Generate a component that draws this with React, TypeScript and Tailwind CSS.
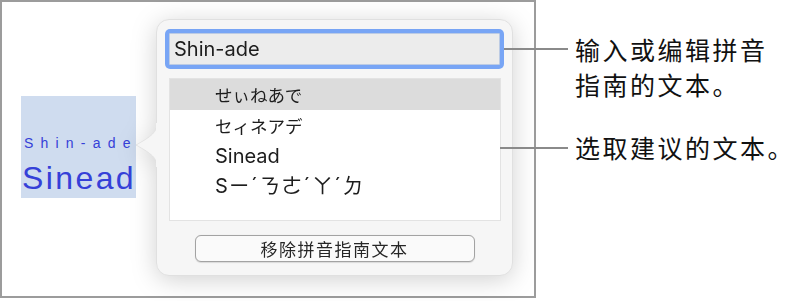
export default function App() {
  const cjk = { fontFamily: '"Noto Sans CJK SC", "Noto Sans", sans-serif' };
  const jp = { fontFamily: '"Noto Sans CJK JP", "Noto Sans", sans-serif' };
  return (
    <div className="relative w-[803px] h-[301px] bg-white overflow-hidden text-[#1d1d1d]" style={{ fontFamily: 'Inter, "Noto Sans CJK SC", sans-serif' }}>
      <div className="flex items-start">
        {/* Frame */}
        <div className="w-[536px] h-[298px] border-2 border-[#9c9c9c] flex items-start pl-[19px]">
          {/* Selected ruby text */}
          <div className="mt-[94px] w-[115px] h-[102px] shrink-0 bg-[#cfdcef] flex flex-col pt-[40px] text-[#3540d8] whitespace-nowrap" style={{ fontFamily: '"Liberation Sans", Arial, sans-serif' }}>
            <div className="text-[14px] leading-none tracking-[7.2px] pl-[3px]">Shin-ade</div>
            <div className="mt-[12px] text-[32px] leading-none tracking-[2.4px] pl-[1px]">Sinead</div>
          </div>

          {/* Popover */}
          <div className="relative ml-[20px] mt-[17px] drop-shadow-[0_4px_12px_rgba(0,0,0,0.18)]">
            <svg className="absolute left-[-21px] top-[104px]" width="22" height="44" viewBox="0 0 22 44">
              <path d="M22 0 C22 9 17 13 1 22 C17 31 22 35 22 44 Z" fill="#f6f6f6" stroke="#dedede" strokeWidth="0.8" />
              <rect x="21" y="-1" width="2" height="46" fill="#f6f6f6" />
            </svg>
            <div className="w-[357px] h-[257px] rounded-[13px] bg-[#f6f6f6] border border-[#e0e0e0] flex flex-col pt-[9px] px-[8px]">
              {/* Input */}
              <div className="h-[40px] rounded-[5px] bg-[#78a5f5] p-[4px]">
                <div className="h-full rounded-[1px] border border-[#bccbe4] bg-[#ececec] flex items-center pl-[4px] text-[20px]">
                  Shin-ade
                </div>
              </div>
              {/* List */}
              <div className="mt-[9px] ml-[4px] w-[332px] h-[143px] border border-[#e3e3e3] bg-white flex flex-col">
                <div className="h-[31px] bg-[#dcdcdc] flex items-center pt-[2px] pl-[45px] text-[17.5px]" style={jp}>せぃねあで</div>
                <div className="h-[30px] flex items-center pt-[2px] pl-[45px] text-[17.5px]" style={jp}>セィネアデ</div>
                <div className="h-[30px] flex items-center pt-[2px] pl-[45px] text-[20px]">Sinead</div>
                <div className="h-[30px] flex items-center pt-[2px] pl-[45px] text-[20px] tracking-[1px] whitespace-nowrap" style={{ fontFamily: 'Inter, "Noto Sans CJK TC", sans-serif' }}>
                  S<span className="text-[21px]">ㄧˊㄋㄜˊㄚˊㄉ</span>
                </div>
              </div>
              {/* Button */}
              <div className="mt-[14px] self-center w-[280px] h-[27px] rounded-[6px] border border-[#a3a3a3] bg-[#fafafa] shadow-[0_0.5px_1px_rgba(0,0,0,0.12)] flex items-center justify-center text-[17px] tracking-[1.5px] text-[#262626]" style={cjk}>
                移除拼音指南文本
              </div>
            </div>
          </div>
        </div>

        {/* Callout texts */}
        <div className="ml-[39px] pt-[32px] text-[25px] leading-[35px] tracking-[2.5px] text-[#111]" style={cjk}>
          <div>输入或编辑拼音<br />指南的文本。</div>
          <div className="mt-[28px]">选取建议的文本。</div>
        </div>
      </div>

      {/* Callout lines */}
      <div className="absolute left-[504px] top-[48px] w-[64px] h-[2px] bg-[#8a8a8a]" />
      <div className="absolute left-[500px] top-[147px] w-[68px] h-[2px] bg-[#8a8a8a]" />
    </div>
  );
}
